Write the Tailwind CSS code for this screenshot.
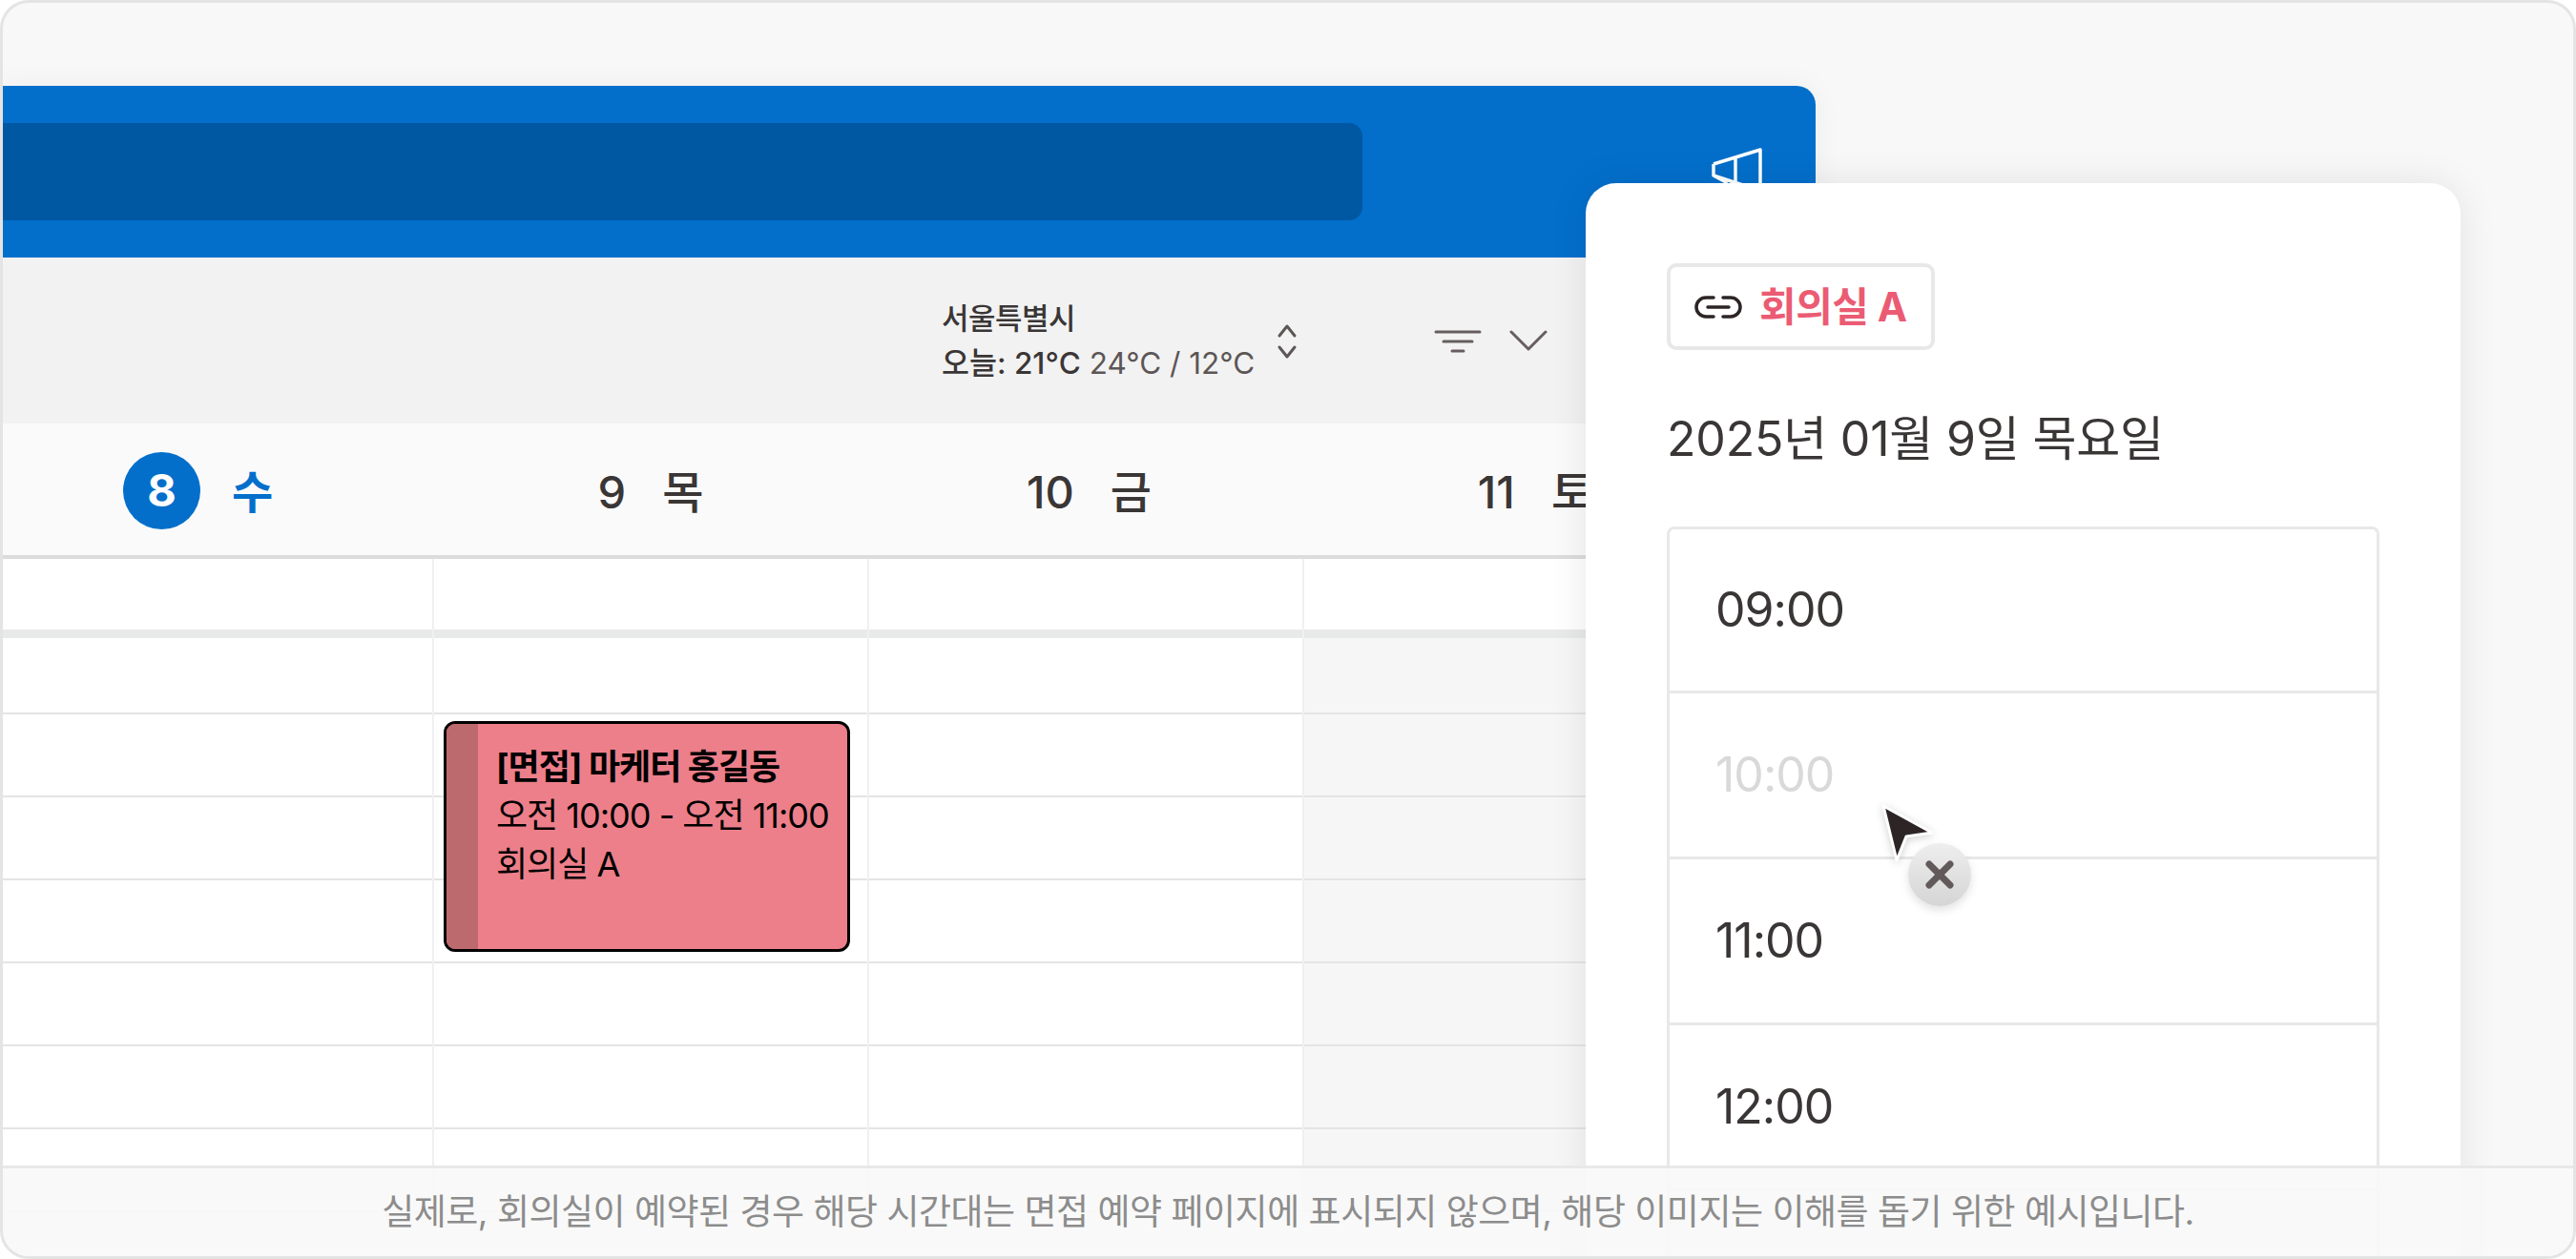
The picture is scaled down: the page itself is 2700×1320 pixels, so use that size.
<!DOCTYPE html>
<html lang="ko">
<head>
  <meta charset="UTF-8" />
  <title>회의실 예약</title>
  <script src="https://cdn.jsdelivr.net/npm/@tailwindcss/browser@4"></script>
</head>
<body class="bg-white font-['Inter','Noto_Sans_CJK_KR',sans-serif] text-[#3a3636]">

  <div class="relative w-[2700px] h-[1320px] overflow-hidden rounded-[30px] border-[3px] border-[#e4e4e4] bg-[#f8f8f8]">

    <!-- calendar window -->
    <div class="mt-[87px] w-[1900px] h-[1300px] rounded-tr-[20px] overflow-hidden shadow-[0_0_30px_rgba(0,0,0,0.05)]">

      <!-- blue header -->
      <div class="h-[180px] bg-[#036fcb] pt-[39px] flex">
        <div class="w-[1425px] h-[102px] bg-[#0058a3] rounded-r-[14px]"></div>
        <svg class="ml-[365px] mt-[21px] w-[60px] h-[70px]" viewBox="0 0 60 70" fill="none" stroke="#fff" stroke-width="3.5" stroke-linejoin="round">
          <path d="M3 22 L52 7 V70 M3 22 V34 L16 41 V70 M3 34 L52 50 M26 16 V70" />
        </svg>
      </div>

      <!-- toolbar -->
      <div class="h-[174px] bg-[#f2f2f2] pl-[984px] flex items-start">
        <div class="pt-[45px]">
          <div class="text-[31px] leading-[38px] font-medium tracking-[-0.5px]">서울특별시</div>
          <div class="mt-[9px] text-[31.5px] leading-[38px] whitespace-nowrap"><span class="font-medium">오늘: 21°C</span> <span class="text-[#5c5656]">24°C / 12°C</span></div>
        </div>
        <svg class="ml-[22px] mt-[69px] w-[24px] h-[38px]" viewBox="0 0 24 38" fill="none" stroke="#5c5656" stroke-width="3" stroke-linecap="round" stroke-linejoin="round">
          <path d="M4 13 L12 3 L20 13 M4 25 L12 35 L20 25" />
        </svg>
        <svg class="ml-[142px] mt-[75px] w-[50px] h-[26px]" viewBox="0 0 50 26" fill="none" stroke="#665e5e" stroke-width="3" stroke-linecap="round">
          <path d="M2 3 H48 M10 13 H40 M19 23 H31" />
        </svg>
        <svg class="ml-[29px] mt-[76px] w-[40px] h-[22px]" viewBox="0 0 40 22" fill="none" stroke="#665e5e" stroke-width="3" stroke-linecap="round" stroke-linejoin="round">
          <path d="M2 2 L20 20 L38 2" />
        </svg>
      </div>

      <!-- day names -->
      <div class="h-[142px] pt-[6px] pb-0 bg-[#fafafa] border-b-[4px] border-[#dcdcdc] flex items-center text-[47px] font-medium">
        <div class="w-[450px] flex items-center">
          <span class="ml-[126px] -mt-[3px] w-[81px] h-[81px] rounded-full bg-[#036fcb] text-white font-bold flex items-center justify-center">8</span>
          <span class="ml-[33px] text-[#036fcb] font-bold">수</span>
        </div>
        <div class="w-[456px] flex items-center justify-center gap-[38px] pl-[2px]"><span>9</span><span>목</span></div>
        <div class="w-[456px] flex items-center justify-center gap-[38px] pl-[9px]"><span>10</span><span>금</span></div>
        <div class="w-[456px] flex items-center justify-center gap-[38px] pl-[32px]"><span>11</span><span>토</span></div>
      </div>

      <!-- time grid -->
      <div class="relative flex bg-white">
        <div class="w-[452px] border-r-2 border-[#f0f0f0]">
          <div class="h-[74px]"></div>
          <div class="h-[9px] bg-[#e8e9e9]"></div>
          <div class="h-[80px] border-b-2 border-[#e4e4e4]"></div>
          <div class="h-[87px] border-b-2 border-[#e4e4e4]"></div>
          <div class="h-[87px] border-b-2 border-[#e4e4e4]"></div>
          <div class="h-[87px] border-b-2 border-[#e4e4e4]"></div>
          <div class="h-[87px] border-b-2 border-[#e4e4e4]"></div>
          <div class="h-[87px] border-b-2 border-[#e4e4e4]"></div>
          <div class="h-[87px] border-b-2 border-[#e4e4e4]"></div>
        </div>
        <div class="w-[456px] border-r-2 border-[#f0f0f0]">
          <div class="h-[74px]"></div>
          <div class="h-[9px] bg-[#e8e9e9]"></div>
          <div class="h-[80px] border-b-2 border-[#e4e4e4]"></div>
          <div class="h-[87px] border-b-2 border-[#e4e4e4]"></div>
          <div class="h-[87px] border-b-2 border-[#e4e4e4]"></div>
          <div class="h-[87px] border-b-2 border-[#e4e4e4]"></div>
          <div class="h-[87px] border-b-2 border-[#e4e4e4]"></div>
          <div class="h-[87px] border-b-2 border-[#e4e4e4]"></div>
          <div class="h-[87px] border-b-2 border-[#e4e4e4]"></div>
        </div>
        <div class="w-[456px] border-r-2 border-[#f0f0f0]">
          <div class="h-[74px]"></div>
          <div class="h-[9px] bg-[#e8e9e9]"></div>
          <div class="h-[80px] border-b-2 border-[#e4e4e4]"></div>
          <div class="h-[87px] border-b-2 border-[#e4e4e4]"></div>
          <div class="h-[87px] border-b-2 border-[#e4e4e4]"></div>
          <div class="h-[87px] border-b-2 border-[#e4e4e4]"></div>
          <div class="h-[87px] border-b-2 border-[#e4e4e4]"></div>
          <div class="h-[87px] border-b-2 border-[#e4e4e4]"></div>
          <div class="h-[87px] border-b-2 border-[#e4e4e4]"></div>
        </div>
        <div class="w-[456px]">
          <div class="h-[74px]"></div>
          <div class="h-[9px] bg-[#e8e9e9]"></div>
          <div class="h-[80px] bg-[#f6f6f6] border-b-2 border-[#e4e4e4]"></div>
          <div class="h-[87px] bg-[#f6f6f6] border-b-2 border-[#e4e4e4]"></div>
          <div class="h-[87px] bg-[#f6f6f6] border-b-2 border-[#e4e4e4]"></div>
          <div class="h-[87px] bg-[#f6f6f6] border-b-2 border-[#e4e4e4]"></div>
          <div class="h-[87px] bg-[#f6f6f6] border-b-2 border-[#e4e4e4]"></div>
          <div class="h-[87px] bg-[#f6f6f6] border-b-2 border-[#e4e4e4]"></div>
          <div class="h-[87px] bg-[#f6f6f6] border-b-2 border-[#e4e4e4]"></div>
        </div>

        <!-- event -->
        <div class="absolute left-[462px] top-[170px] w-[426px] h-[242px] flex overflow-hidden rounded-[12px] border-[3px] border-black bg-[#ed7f8a] text-black">
          <div class="w-[33px] bg-[#bd6a6e]"></div>
          <div class="pl-[19px] pt-[20px] text-[36px] leading-[51px] tracking-[-1px] whitespace-nowrap">
            <div class="font-bold">[면접] 마케터 홍길동</div>
            <div>오전 10:00 - 오전 11:00</div>
            <div>회의실 A</div>
          </div>
        </div>
      </div>
    </div>

    <!-- booking card -->
    <div class="absolute left-[1659px] top-[189px] w-[917px] h-[1300px] rounded-t-[32px] bg-white px-[85px] pt-[84px] shadow-[0_0_40px_rgba(0,0,0,0.09)]">
      <div class="inline-flex items-center h-[91px] w-[281px] rounded-[10px] border-[4px] border-[#e8e8e8] pl-[25px]">
        <svg class="w-[50px] h-[24px] shrink-0" viewBox="0 0 50 24" fill="none" stroke="#2d2525" stroke-width="3.5" stroke-linecap="round">
          <path d="M20 2 H12 A10 10 0 0 0 12 22 H20 M30 2 H38 A10 10 0 0 1 38 22 H30 M14 12 H36" />
        </svg>
        <span class="ml-[18px] text-[42px] font-bold text-[#eb5b73] tracking-[-0.5px] whitespace-nowrap">회의실 A</span>
      </div>

      <div class="mt-[58px] text-[50px] leading-[70px] tracking-[-0.2px] whitespace-nowrap">2025년 01월 9일 목요일</div>

      <div class="mt-[57px] w-[747px] rounded-t-[8px] border-[3px] border-b-0 border-[#e8e8e8] text-[50px] tracking-[-1px]">
        <div class="h-[172px] pl-[48px] flex items-center border-b-[3px] border-[#e8e8e8]">09:00</div>
        <div class="h-[174px] pl-[48px] flex items-center border-b-[3px] border-[#e8e8e8] text-[#d9d9d9]">10:00</div>
        <div class="h-[174px] pl-[48px] flex items-center border-b-[3px] border-[#e8e8e8]">11:00</div>
        <div class="h-[174px] pl-[48px] flex items-center border-b-[3px] border-[#e8e8e8]">12:00</div>
        <div class="h-[174px]"></div>
      </div>
    </div>

    <!-- cursor with not-allowed badge -->
    <svg class="absolute left-[1960px] top-[832px] w-[120px] h-[130px] drop-shadow-[0_2px_4px_rgba(0,0,0,0.18)]" viewBox="0 0 120 130" fill="none">
      <path d="M11 10 L62 38 L35 42 L25 67 Z" fill="#2d2525" stroke="#fff" stroke-width="3" stroke-linejoin="round" />
    </svg>
    <div class="absolute left-[1997px] top-[881px] w-[66px] h-[66px] rounded-full bg-gradient-to-b from-[#eeeeee] to-[#d5d5d5] shadow-[0_4px_10px_rgba(0,0,0,0.12)] flex items-center justify-center">
      <svg class="w-[30px] h-[30px]" viewBox="0 0 30 30" fill="none" stroke="#625a5a" stroke-width="7" stroke-linecap="round">
        <path d="M4 4 L26 26 M26 4 L4 26" />
      </svg>
    </div>

    <!-- notice -->
    <div class="absolute left-0 right-0 bottom-0 h-[95px] border-t-[3px] border-[#e8e8e8] bg-[#f8f8f8]/90 flex items-center justify-center">
      <p class="text-[37px] text-[#8c8c8c] tracking-[-0.5px] whitespace-nowrap">실제로, 회의실이 예약된 경우 해당 시간대는 면접 예약 페이지에 표시되지 않으며, 해당 이미지는 이해를 돕기 위한 예시입니다.</p>
    </div>
  </div>

</body>
</html>
